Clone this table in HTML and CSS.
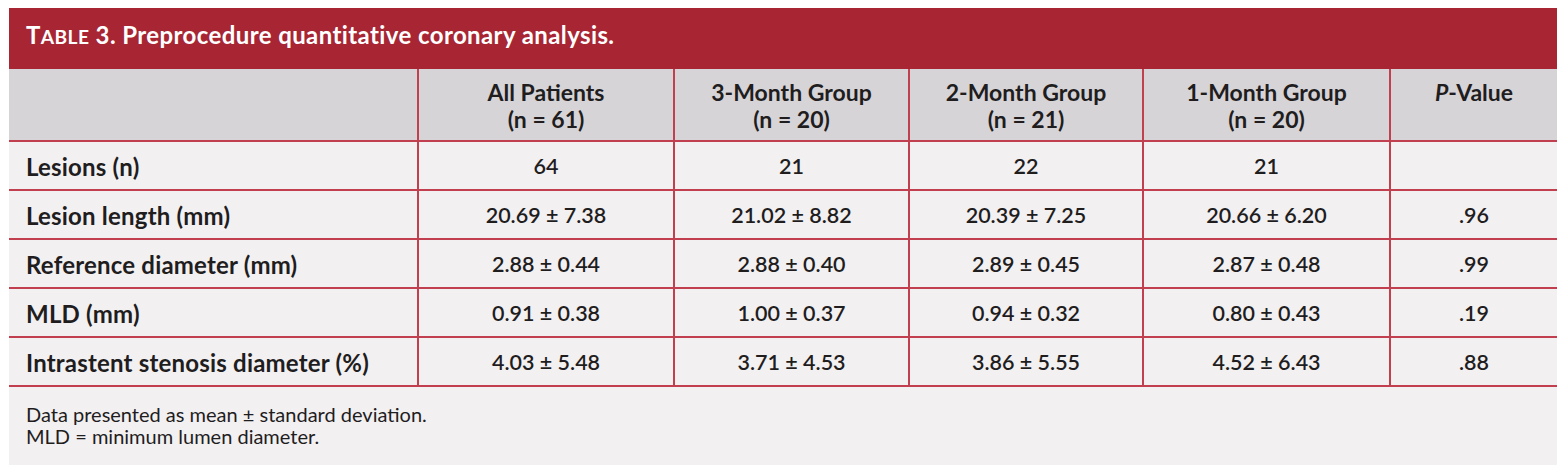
FILE: index.html
```html
<!DOCTYPE html>
<html lang="en">
<head>
<meta charset="utf-8">
<title>Table 3</title>
<link rel="stylesheet" href="styles.css">
</head>
<body>
<div class="card">
  <div class="caption">T<span class="sc">ABLE</span> 3. Preprocedure quantitative coronary analysis.</div>
  <table class="data">
    <colgroup>
      <col class="c1"><col class="c2"><col class="c3"><col class="c4"><col class="c5"><col class="c6">
    </colgroup>
    <thead>
      <tr>
        <th></th>
        <th>All Patients<br>(n = 61)</th>
        <th>3-Month Group<br>(n = 20)</th>
        <th>2-Month Group<br>(n = 21)</th>
        <th>1-Month Group<br>(n = 20)</th>
        <th><i>P</i>-Value</th>
      </tr>
    </thead>
    <tbody>
      <tr><th>Lesions (n)</th><td>64</td><td>21</td><td>22</td><td>21</td><td></td></tr>
      <tr><th>Lesion length (mm)</th><td>20.69 ± 7.38</td><td>21.02 ± 8.82</td><td>20.39 ± 7.25</td><td>20.66 ± 6.20</td><td>.96</td></tr>
      <tr><th>Reference diameter (mm)</th><td>2.88 ± 0.44</td><td>2.88 ± 0.40</td><td>2.89 ± 0.45</td><td>2.87 ± 0.48</td><td>.99</td></tr>
      <tr><th>MLD (mm)</th><td>0.91 ± 0.38</td><td>1.00 ± 0.37</td><td>0.94 ± 0.32</td><td>0.80 ± 0.43</td><td>.19</td></tr>
      <tr><th>Intrastent stenosis diameter (%)</th><td>4.03 ± 5.48</td><td>3.71 ± 4.53</td><td>3.86 ± 5.55</td><td>4.52 ± 6.43</td><td>.88</td></tr>
    </tbody>
  </table>
  <div class="notes">
    <p>Data presented as mean ± standard deviation.</p>
    <p>MLD = minimum lumen diameter.</p>
  </div>
</div>
</body>
</html>
```

FILE: styles.css
```css
html, body {
  background: #ffffff;
}
body {
  margin: 8px 0 0 9px;
  font-family: Lato, "Open Sans", sans-serif;
  color: #1f1d1e;
}
.card {
  width: 1548px;
  background: #f2f0f1;
}
.caption {
  background: #a82533;
  color: #ffffff;
  font-weight: 700;
  font-size: 24px;
  letter-spacing: 0.4px;
  line-height: 26px;
  height: 26px;
  padding: 14px 17px 21px;
}
.sc {
  font-size: 0.8em;
}
.data {
  width: 1548px;
  table-layout: fixed;
  border-collapse: separate;
  border-spacing: 0;
}
.c1 { width: 408px; }
.c2 { width: 256px; }
.c3 { width: 235px; }
.c4 { width: 234px; }
.c5 { width: 247px; }
.c6 { width: 168px; }
.data th,
.data td {
  border-bottom: 2px solid #c23f4f;
  padding: 0;
  font-size: 21px;
}
.data th + th,
.data td {
  border-left: 2px solid #c23f4f;
}
.data thead th {
  background: #d6d4d7;
  font-weight: 700;
  font-size: 23px;
  height: 61px;
  line-height: 27px;
  padding-top: 10px;
  vertical-align: top;
  text-align: center;
}
.data tbody th,
.data tbody td {
  height: 45px;
  line-height: 45px;
  padding-top: 2px;
}
.data tbody th {
  text-align: left;
  font-weight: 700;
  font-size: 24px;
  letter-spacing: 0.2px;
  padding-left: 17px;
}
.data tbody td {
  text-align: center;
  font-weight: 600;
  font-size: 21.5px;
}
.notes {
  padding: 17px 17px 18px;
  font-size: 20px;
  line-height: 21.5px;
}
.notes p {
  margin: 0;
}
```
